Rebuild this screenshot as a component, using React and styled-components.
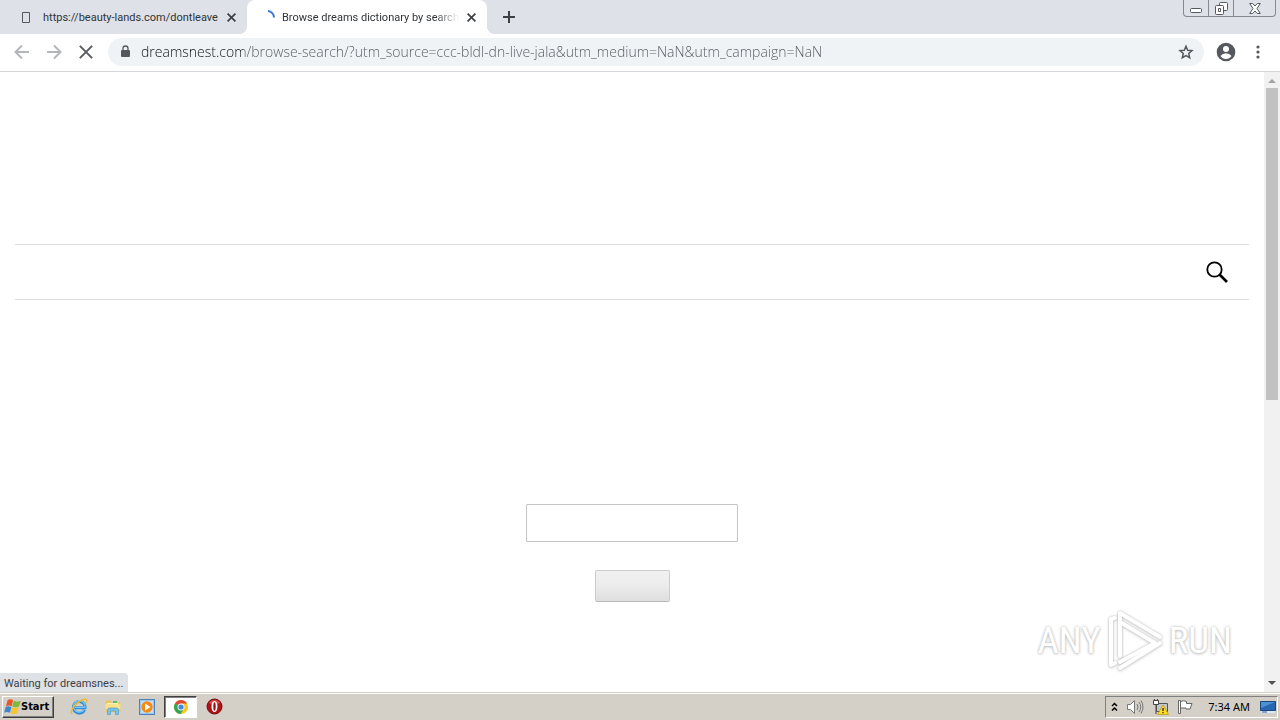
import React from "react";
import styled, { createGlobalStyle } from "styled-components";

const Global = createGlobalStyle`
  * { box-sizing: border-box; }
  body { margin: 0; background: #fff; }
  button, input { font: inherit; }
  button { padding: 0; border: 0; background: none; color: inherit; }
  svg { display: block; flex: none; }
`;

const uiFont = `"DejaVu Sans Condensed", "DejaVu Sans", sans-serif`;

const Desktop = styled.div`
  display: flex;
  flex-direction: column;
  height: 100vh;
  overflow: hidden;
  font: 11px/16px ${uiFont};
  color: #000;
`;

const TabStrip = styled.header`
  display: flex;
  flex: none;
  height: 34px;
  background: #dee1e8;
`;

const Tab = styled.div`
  position: relative;
  display: flex;
  align-items: center;
  width: ${(p) => (p.$active ? 240 : 247)}px;
  padding: 0 8px 0 ${(p) => (p.$active ? 13 : 18)}px;
  border-radius: 8px 8px 0 0;
  background: ${(p) => (p.$active ? "#fff" : "transparent")};
  color: #303336;
  font: 11px/18px Roboto, sans-serif;

  &::before,
  &::after {
    content: "";
    display: ${(p) => (p.$active ? "block" : "none")};
    position: absolute;
    bottom: 0;
    width: 8px;
    height: 8px;
  }
  &::before {
    right: 100%;
    background: radial-gradient(circle at 0 0, transparent 8px, #fff 8px);
  }
  &::after {
    left: 100%;
    background: radial-gradient(circle at 100% 0, transparent 8px, #fff 8px);
  }
`;

const TabIcon = styled.span`
  display: flex;
  flex: none;
  justify-content: center;
  width: 16px;
  margin-right: ${(p) => (p.$active ? 6 : 9)}px;
`;

const TabTitle = styled.span`
  flex: 1;
  padding-top: 2px;
  overflow: hidden;
  white-space: nowrap;
  mask-image: ${(p) => (p.$fade ? "linear-gradient(to left, transparent, #000 24px)" : "none")};
`;

const IconButton = styled.button`
  display: flex;
  flex: none;
  align-items: center;
  justify-content: center;
  width: ${(p) => p.$size || 16}px;
  height: ${(p) => p.$size || 16}px;
  color: ${(p) => p.$color || "#3c4043"};
`;

const TabClose = styled(IconButton)`
  margin-left: 4px;
`;

const NewTab = styled(IconButton)`
  align-self: center;
  margin-left: 8px;
`;

const WindowControls = styled.div`
  display: flex;
  align-self: flex-start;
  height: 17px;
  margin: 0 4px 0 auto;
  border: 1px solid #858992;
  border-top: 0;
  border-radius: 0 0 4px 4px;
`;

const WindowButton = styled.button`
  display: flex;
  align-items: center;
  justify-content: center;
  width: ${(p) => p.$width}px;
  color: #55585f;
  & + & {
    border-left: 1px solid #858992;
  }
`;

const Toolbar = styled.div`
  display: flex;
  flex: none;
  align-items: center;
  height: 38px;
  padding: 0 6px 1px;
  border-bottom: 1px solid #d5d7da;
  background: #fff;
`;

const AddressBar = styled.label`
  display: flex;
  flex: 1;
  align-items: center;
  height: 28px;
  margin: 0 6px;
  padding: 0 6px 0 12px;
  border-radius: 14px;
  background: #f0f3f5;
`;

const Address = styled.input`
  flex: 1;
  min-width: 0;
  height: 20px;
  margin-left: 9px;
  padding: 0;
  border: 0;
  outline: 0;
  color: transparent;
  background: linear-gradient(to right, #101113 102px, #55595e 102px);
  background-clip: text;
  font: 300 14px/20px "Open Sans", sans-serif;
`;

const Viewport = styled.div`
  position: relative;
  display: flex;
  flex: 1;
  min-height: 0;
`;

const Page = styled.main`
  flex: 1;
  padding: 172px 15px 0;
  overflow: hidden;
  background: #fff;
`;

const SiteNav = styled.nav`
  display: flex;
  align-items: center;
  justify-content: flex-end;
  height: 56px;
  padding-right: 20px;
  border: solid #ddd;
  border-width: 1px 0;
`;

const SearchForm = styled.form`
  display: flex;
  flex-direction: column;
  align-items: center;
  gap: 28px;
  padding-top: 204px;
`;

const SearchField = styled.input`
  width: 212px;
  height: 38px;
  padding: 0 8px;
  border: 1px solid #c4c4c4;
  border-radius: 1px;
  background: #fff;
`;

const Submit = styled.button`
  width: 75px;
  height: 32px;
  border: 1px solid #bbb;
  border-color: #ccc #ccc #bbb;
  border-radius: 2px;
  background: linear-gradient(#f1f1f1, #ececec 50%, #dedede);
`;

const ScrollBar = styled.div`
  display: flex;
  flex: none;
  flex-direction: column;
  align-items: center;
  width: 16px;
  background: #f1f1f1;
`;

const ScrollTrack = styled.div`
  flex: 1;
  width: 12px;
`;

const ScrollThumb = styled.div`
  height: 53%;
  background: #c1c1c1;
`;

const StatusBubble = styled.div`
  position: absolute;
  bottom: 0;
  left: 0;
  height: 19px;
  width: 128px;
  padding: 3px 4px 0;
  border-radius: 0 4px 0 0;
  background: #dee1e6;
  color: #3c4043;
  font: 11px/16px Roboto, sans-serif;
  white-space: nowrap;
`;

const Watermark = styled.div`
  position: absolute;
  right: 48px;
  bottom: 18px;
  display: flex;
  align-items: center;
  gap: 5px;
  color: #fff;
  font: 37px/40px "Roboto Condensed", "Liberation Sans Narrow", sans-serif;
  text-shadow: 0 0 3px #bbb, 0 1px 3px #ccc;
`;

const Taskbar = styled.footer`
  display: flex;
  flex: none;
  align-items: center;
  height: 28px;
  padding: 1px 2px;
  border-top: 1px solid #d4d0c8;
  background: #d4d0c8;
  box-shadow: inset 0 1px #fff;
`;

const StartButton = styled.button`
  display: flex;
  align-items: center;
  width: 52px;
  height: 22px;
  margin-right: 8px;
  padding-left: 1px;
  border: 1px solid;
  border-color: #fff #404040 #404040 #fff;
  box-shadow: inset -1px -1px #808080;
  font: bold 11px/16px ${uiFont};
`;

const TaskButton = styled.button`
  display: flex;
  align-items: center;
  justify-content: center;
  width: ${(p) => (p.$active ? 33 : 34)}px;
  height: 22px;
  border: 1px solid;
  border-color: ${(p) => (p.$active ? "#404040 #fff #fff #404040" : "transparent")};
  background: ${(p) => (p.$active ? "#fff" : "transparent")};
  box-shadow: ${(p) => (p.$active ? "inset 1px 1px #808080" : "none")};
`;

const Tray = styled.div`
  display: flex;
  align-items: center;
  gap: 8px;
  height: 22px;
  margin-left: auto;
  padding: 0 1px 0 5px;
  border: 1px solid;
  border-color: #808080 #fff #fff #808080;
`;

const Clock = styled.time`
  margin: 0 2px 0 6px;
  font: 11px/16px "Noto Sans", sans-serif;
  white-space: nowrap;
`;

const Cross = ({ size = 9, width = 1.5 }) => (
  <svg width={size} height={size} viewBox="0 0 8 8" fill="none" stroke="currentColor" strokeWidth={width}>
    <path d="M.5.5l7 7M7.5.5l-7 7" />
  </svg>
);

const Arrow = ({ forward }) => (
  <svg width="16" height="16" viewBox="0 0 16 16" fill="none" stroke="currentColor" strokeWidth="2">
    <path d={forward ? "M1 8h13M8 1.5L14.5 8 8 14.5" : "M15 8H2M8 1.5L1.500 8 8 14.5"} />
  </svg>
);

const ScrollArrow = ({ down }) => (
  <svg width="16" height="16" viewBox="0 0 16 16" fill={down ? "#505050" : "#a3a3a3"}>
    <path d={down ? "M4 5h8l-4 4z" : "M4 11h8L8 7z"} />
  </svg>
);

const WindowsFlag = () => (
  <svg width="17" height="18" viewBox="0 0 16 16">
    <path d="M3.500 1.500Q6 -.3 8.600 1.500L7.200 7.200Q4.500 5.800 1.800 7.200z" fill="#e8562a" />
    <path d="M9.200 2.200Q12 3.700 15.800 2.200L14.200 7.600Q11 9 7.800 7.600z" fill="#7fb93c" />
    <path d="M1.600 7.800Q4.500 6.500 7 8L5.600 13.500Q3 12 .2 13.400z" fill="#3c87d0" />
    <path d="M7.600 8.300Q10.500 9.800 14 8.300L12.400 13.900Q9.500 15.500 6.200 13.800z" fill="#f7c331" />
  </svg>
);

const Explorer = () => (
  <svg width="18" height="18" viewBox="0 0 18 18" fill="none">
    <path d="M14.500 11.800A5.800 5.800 0 1 1 15 8.500v1.200H5" stroke="#2f8edb" strokeWidth="3" />
    <path d="M13.800 12A5.800 5.800 0 1 1 15 9.300H5" stroke="#7cc8f6" strokeWidth="1.200" />
    <path d="M2 16C-.5 13 5 5.500 11 2.500 16 0 18 1.500 16 5" stroke="#efb92f" strokeWidth="1.400" />
  </svg>
);

const Folder = () => (
  <svg width="18" height="18" viewBox="0 0 18 18">
    <path d="M2 2.500h5l1 2h8.500V14H2z" fill="#e9c761" />
    <path d="M3 5h11v8H3z" fill="#fff3b5" />
    <path d="M1.500 6h15v5h-15z" fill="#f8e28c" />
    <path d="M3.500 16.500V12q0-2 2-2h7q2 0 2 2v4.500h-3V13h-5v3.500z" fill="#79c1ea" stroke="#4696c9" strokeWidth=".6" />
    <path d="M9 3h4v2H9z" fill="#69b866" />
  </svg>
);

const MediaPlayer = () => (
  <svg width="18" height="18" viewBox="0 0 18 18">
    <rect x="1.500" y="1.500" width="15" height="15" fill="#9cc7ed" stroke="#4c83ba" />
    <rect x="3" y="3" width="12" height="12" fill="#c3ddf5" />
    <circle cx="9" cy="9" r="5.700" fill="#f28a16" />
    <path d="M7 5.500L12.500 9 7 12.500z" fill="#fff" />
  </svg>
);

const Chrome = () => (
  <svg width="16" height="16" viewBox="0 0 16 16">
    <circle cx="8" cy="8" r="7" fill="#f5c723" />
    <path d="M8 8L1.940 4.500A7 7 0 0 1 14.060 4.500H8z" fill="#df4638" />
    <path d="M8 8l-6.060-3.500A7 7 0 0 0 7.500 15L11 9.700z" fill="#35a355" />
    <circle cx="8" cy="8" r="3.500" fill="#fff" />
    <circle cx="8" cy="8" r="2.600" fill="#4387e8" />
  </svg>
);

const Opera = () => (
  <svg width="17" height="17" viewBox="0 0 17 17">
    <circle cx="8.500" cy="8.500" r="7.500" fill="#b01317" stroke="#75090c" />
    <path d="M3 5A6.500 6.500 0 0 1 14 5Q8.500 8 3 5z" fill="#de4d49" />
    <ellipse cx="8.500" cy="8.500" rx="3" ry="5.500" fill="#fff" />
    <ellipse cx="8.500" cy="8.500" rx="1.200" ry="4.300" fill="#a40d11" />
  </svg>
);

const LogoMark = styled.svg`
  filter: drop-shadow(0 0 1px #bbb) drop-shadow(0 1px 1px #ddd);
`;

const PlayMark = () => (
  <LogoMark
    width="58"
    height="66"
    viewBox="0 0 58 66"
    fill="none"
    stroke="#fff"
    strokeWidth="4"
    strokeLinejoin="round"
    strokeLinecap="round"
  >
    <path d="M14 48V5L54 29M14 14L49 35 14 54" />
    <path d="M9 10L5 11v46l4-2M14 60L54 35" />
  </LogoMark>
);

export default function App() {
  return (
    <Desktop>
      <Global />
      <TabStrip>
        <Tab>
          <TabIcon>
            <svg width="8" height="11" fill="none" stroke="#55585e">
              <path d="M.5.5h7v10h-7z" />
            </svg>
          </TabIcon>
          <TabTitle>https://beauty-lands.com/dontleave</TabTitle>
          <TabClose aria-label="Close tab"><Cross /></TabClose>
        </Tab>
        <Tab $active>
          <TabIcon $active>
            <svg width="16" height="16" fill="none" stroke="#3b78d8" strokeWidth="2">
              <path d="M8 2a6.500 6.500 0 0 1 6 6.500" />
            </svg>
          </TabIcon>
          <TabTitle $fade>Browse dreams dictionary by search</TabTitle>
          <TabClose aria-label="Close tab"><Cross /></TabClose>
        </Tab>
        <NewTab aria-label="New tab" $size={28}>
          <svg width="12" height="12" stroke="currentColor" strokeWidth="2">
            <path d="M6 0v12M0 6h12" />
          </svg>
        </NewTab>
        <WindowControls>
          <WindowButton $width={24} aria-label="Minimize">
            <svg width="12" height="12" fill="#fff" stroke="currentColor">
              <rect x=".5" y="6.500" width="11" height="4" rx="1" />
            </svg>
          </WindowButton>
          <WindowButton $width={25} aria-label="Restore">
            <svg width="13" height="13" fill="#fff" stroke="currentColor">
              <rect x="4.500" y=".5" width="8" height="8" rx="1" />
              <rect x=".5" y="3.500" width="8" height="9" rx="1" />
              <path d="M3.500 6.500h2v3h-2z" />
            </svg>
          </WindowButton>
          <WindowButton $width={42} aria-label="Close">
            <svg width="12" height="11" viewBox="0 0 12 11" fill="#fff" stroke="currentColor">
              <path d="M.7.5h3L6 3 8.300.5h3L8 5.500l3.300 5h-3L6 8l-2.300 2.500h-3L4 5.500z" />
            </svg>
          </WindowButton>
        </WindowControls>
      </TabStrip>

      <Toolbar>
        <IconButton $size={32} $color="#b4b6b9" aria-label="Back"><Arrow /></IconButton>
        <IconButton $size={32} $color="#b4b6b9" aria-label="Forward"><Arrow forward /></IconButton>
        <IconButton $size={32} $color="#5a5d61" aria-label="Stop"><Cross size={14} width={1.2} /></IconButton>
        <AddressBar>
          <svg width="12" height="14" viewBox="0 0 12 14" fill="#55595e">
            <rect x="1" y="5" width="9" height="7" rx="1" />
            <path d="M3 6V3.500a2.500 2.500 0 0 1 5 0V6" fill="none" stroke="#55595e" strokeWidth="1.300" />
          </svg>
          <Address
            aria-label="Address"
            defaultValue="dreamsnest.com/browse-search/?utm_source=ccc-bldl-dn-live-jala&utm_medium=NaN&utm_campaign=NaN"
          />
          <IconButton $size={24} $color="#55595e" aria-label="Bookmark">
            <svg width="16" height="16" viewBox="0 0 16 16" fill="none" stroke="currentColor" strokeWidth="1.500">
              <path d="M8 2.200l1.700 4 4.300.4-3.300 2.900 1 4.200L8 11.500l-3.700 2.200 1-4.200L2 6.600l4.300-.4z" />
            </svg>
          </IconButton>
        </AddressBar>
        <IconButton $size={32} $color="#55595e" aria-label="Profile">
          <svg width="20" height="20" viewBox="0 0 20 20">
            <circle cx="10" cy="10" r="9.300" fill="currentColor" />
            <circle cx="10" cy="7" r="3" fill="#fff" />
            <path d="M4.500 14q2-2.700 5.500-2.700t5.500 2.700q-2 3-5.500 3t-5.500-3z" fill="#fff" />
          </svg>
        </IconButton>
        <IconButton $size={32} $color="#55595e" aria-label="Menu">
          <svg width="4" height="14" fill="currentColor">
            <circle cx="2" cy="2" r="1.600" />
            <circle cx="2" cy="7" r="1.600" />
            <circle cx="2" cy="12" r="1.600" />
          </svg>
        </IconButton>
      </Toolbar>

      <Viewport>
        <Page>
          <SiteNav>
            <IconButton $size={24} $color="#000" aria-label="Search">
              <svg width="24" height="24" viewBox="0 0 24 24" fill="none" stroke="currentColor">
                <circle cx="9.500" cy="9.500" r="7.200" strokeWidth="1.800" />
                <path d="M14.500 14.500l7.500 7.500" strokeWidth="2.600" />
              </svg>
            </IconButton>
          </SiteNav>
          <SearchForm onSubmit={(e) => e.preventDefault()}>
            <SearchField type="text" aria-label="Search dreams" />
            <Submit type="submit" aria-label="Submit search" />
          </SearchForm>
        </Page>
        <ScrollBar>
          <ScrollArrow />
          <ScrollTrack><ScrollThumb /></ScrollTrack>
          <ScrollArrow down />
        </ScrollBar>
        <Watermark>
          <span>ANY</span>
          <PlayMark />
          <span>RUN</span>
        </Watermark>
        <StatusBubble>Waiting for dreamsnes...</StatusBubble>
      </Viewport>

      <Taskbar>
        <StartButton><WindowsFlag />Start</StartButton>
        <TaskButton aria-label="Internet Explorer"><Explorer /></TaskButton>
        <TaskButton aria-label="File Explorer"><Folder /></TaskButton>
        <TaskButton aria-label="Media Player"><MediaPlayer /></TaskButton>
        <TaskButton $active aria-label="Chrome"><Chrome /></TaskButton>
        <TaskButton aria-label="Opera"><Opera /></TaskButton>
        <Tray>
          <svg width="7" height="10" fill="none" stroke="#000" strokeWidth="1.500">
            <path d="M1 4l2.500-2.500L6 4M1 8.500L3.500 6 6 8.500" />
          </svg>
          <svg width="18" height="16" viewBox="0 0 18 16" fill="none" stroke="#777">
            <path d="M1.500 5.500h3l4-4v13l-4-4h-3z" fill="#fff" />
            <path d="M11 5q2 3 0 6M13 3q3.500 5 0 10M15 1.500q4 6.500 0 13" />
          </svg>
          <svg width="17" height="16" viewBox="0 0 17 16">
            <path d="M4.500 4.500h11v8h-11z" fill="#c3c6ca" stroke="#555" />
            <path d="M1.500 1.500h5v4h-5zM4 6v9M2.500 0v2M5.500 0v2" fill="#fff" stroke="#444" />
            <path d="M11 6l5.500 9.500h-11z" fill="#ffdf20" stroke="#bd9400" strokeWidth=".7" />
            <path d="M11 9v3M11 13v1.300" stroke="#222" strokeWidth="1.300" />
          </svg>
          <svg width="17" height="16" viewBox="0 0 17 16" fill="#fff" stroke="#666">
            <path d="M3.500 2.500q3-1.500 6 0v2h5.500l-2 5.500H9V9H3.500z" />
            <path d="M1.500 1.500h2v13h-2z" />
          </svg>
          <Clock>7:34 AM</Clock>
          <svg width="16" height="14" viewBox="0 0 16 14">
            <path d="M.5 1.500h15v9H.5z" fill="#2866b1" stroke="#1b477e" />
            <path d="M1 2h14L1 8z" fill="#4e90d5" />
            <path d="M1 11h14v2H1z" fill="#dce8f4" />
            <path d="M2 12h5" stroke="#31639b" />
          </svg>
        </Tray>
      </Taskbar>
    </Desktop>
  );
}
